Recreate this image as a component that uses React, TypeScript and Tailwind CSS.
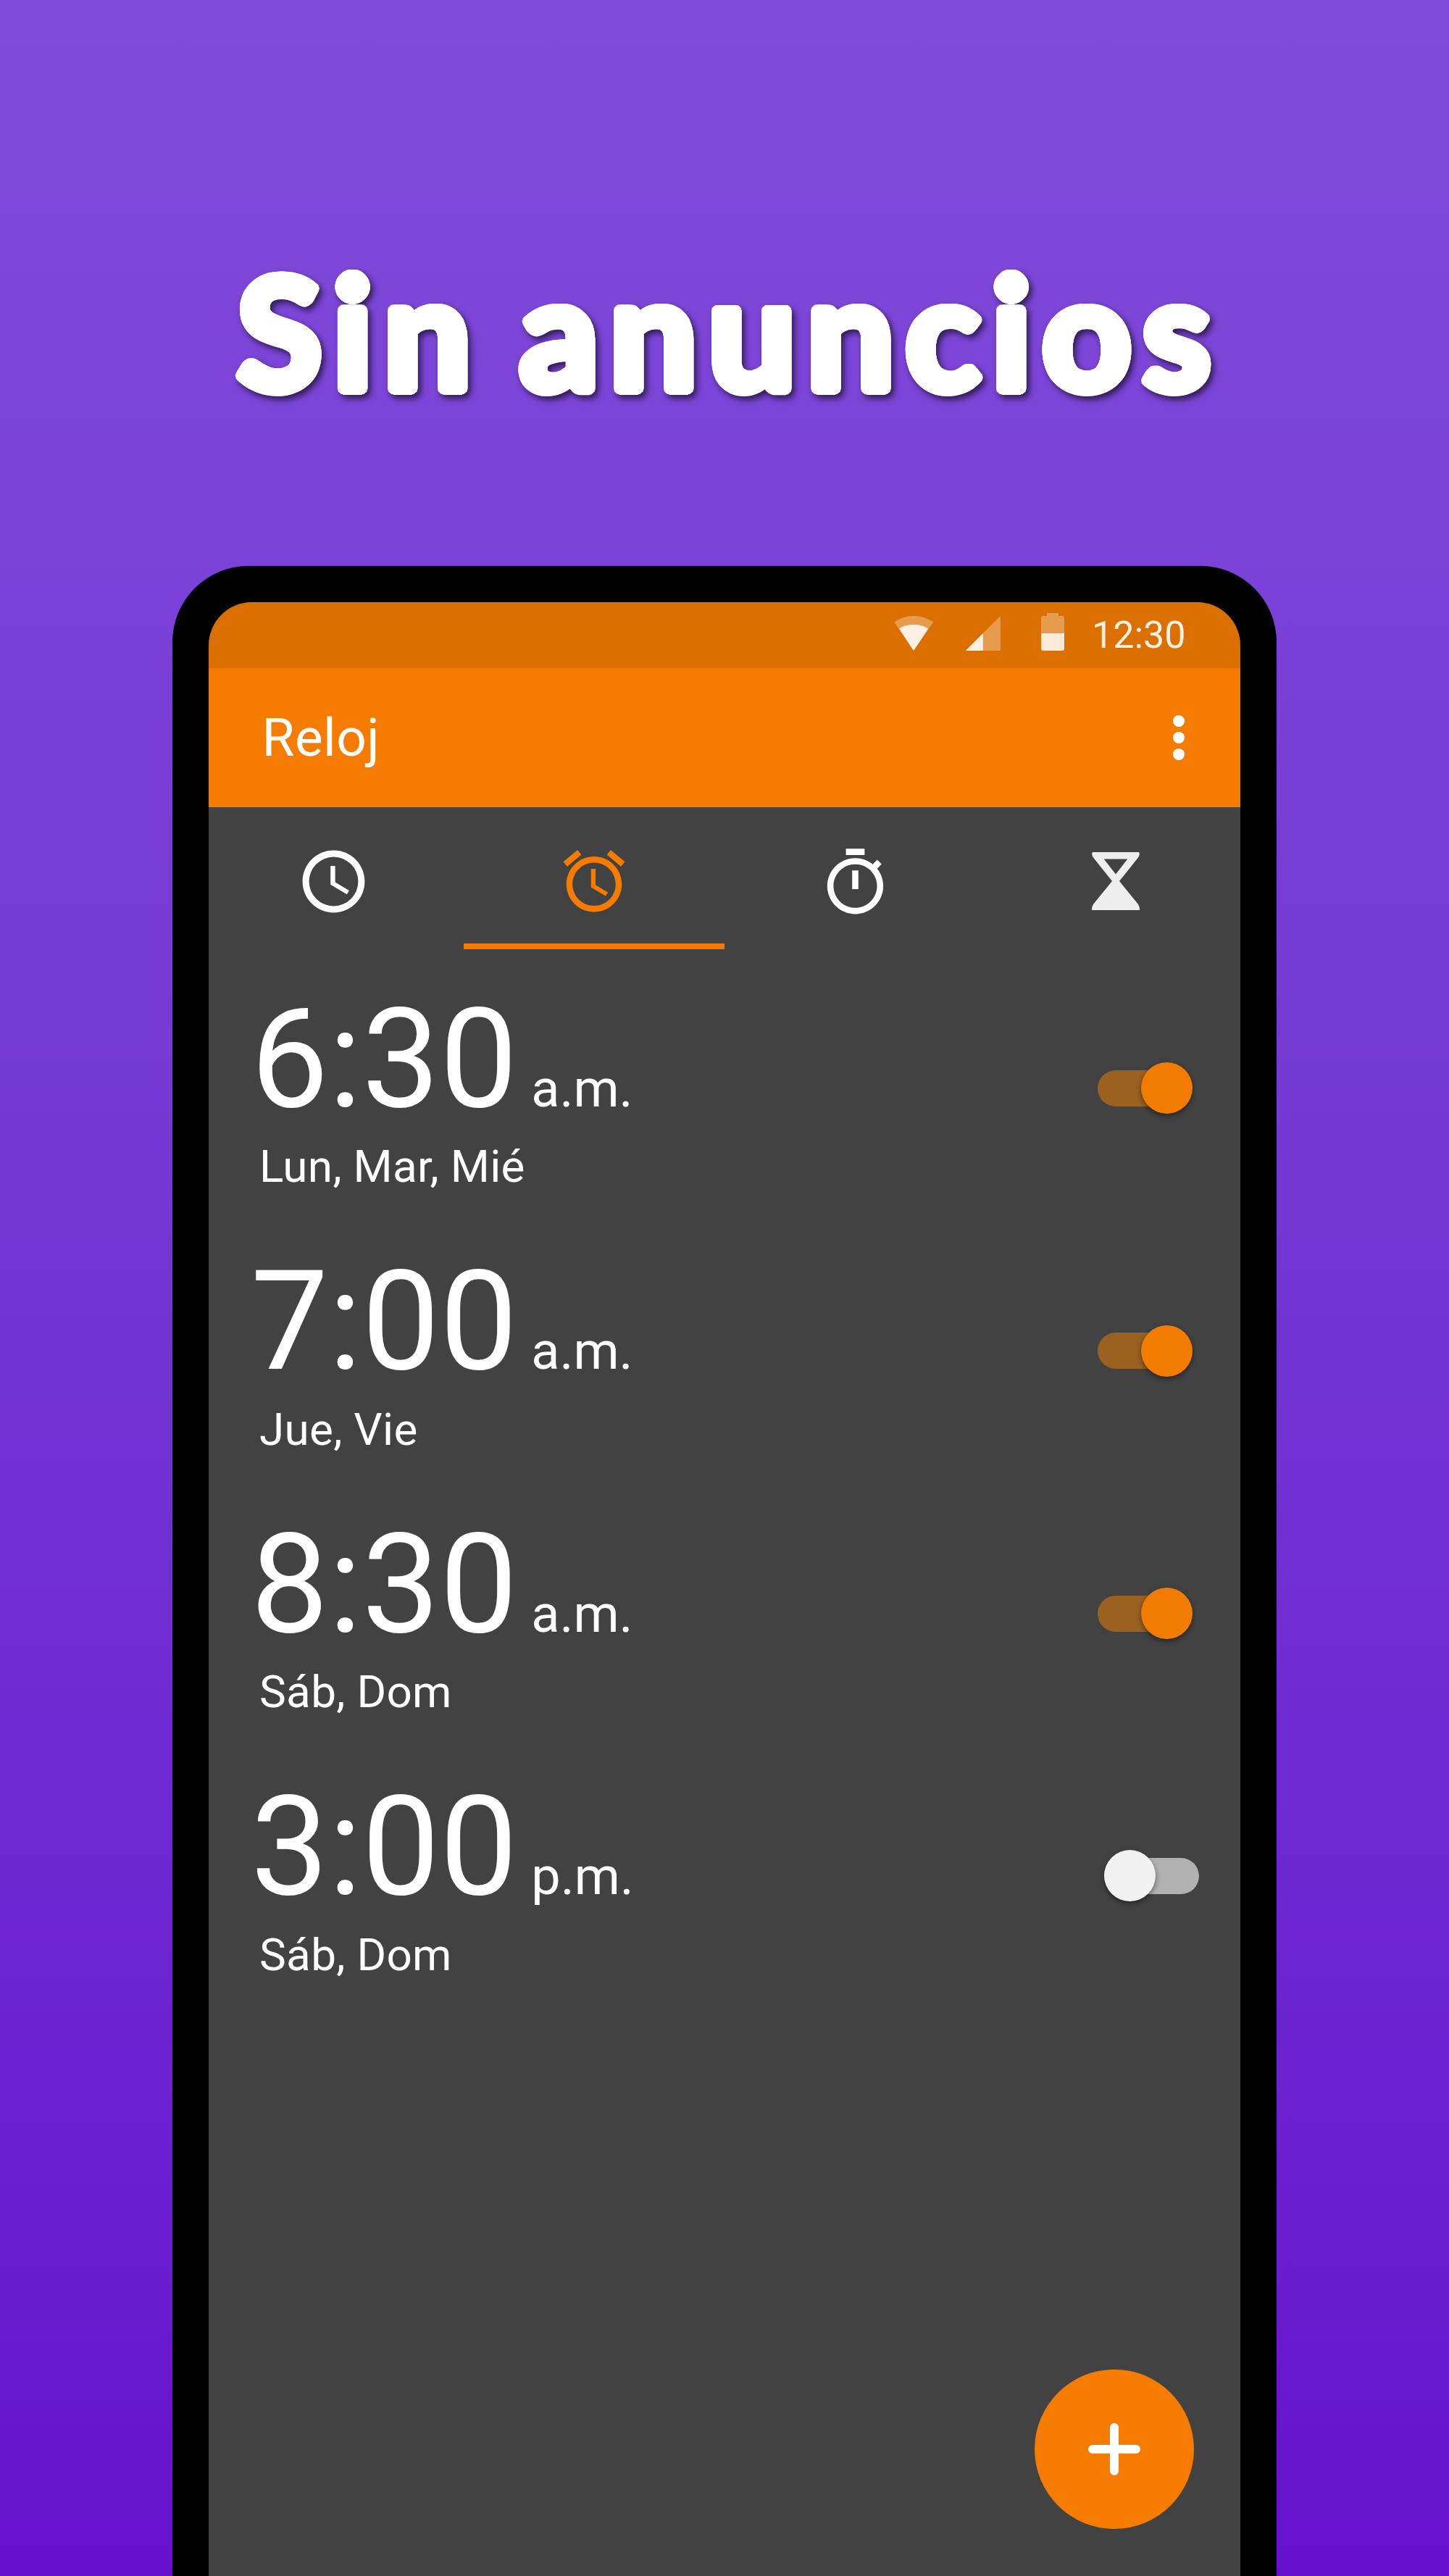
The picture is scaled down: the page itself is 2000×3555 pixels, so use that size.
import React from "react";

const ALARMS = [
  { time: "6:30", period: "a.m.", days: "Lun, Mar, Mié", on: true },
  { time: "7:00", period: "a.m.", days: "Jue, Vie", on: true },
  { time: "8:30", period: "a.m.", days: "Sáb, Dom", on: true },
  { time: "3:00", period: "p.m.", days: "Sáb, Dom", on: false },
];

// A ring of solid shadows thickens the letters and rounds their corners.
const ROUNDING = Array.from({ length: 32 }, (_, i) => {
  const angle = (i / 32) * Math.PI * 2;
  return `${(Math.cos(angle) * 7.5).toFixed(2)}px ${(Math.sin(angle) * 7.5).toFixed(2)}px 0 #fff`;
}).join(", ");

function StatusIcons() {
  return (
    <svg className="mt-[15px] h-[52px] w-[236px]" viewBox="1234 846 236 52" fill="#fff">
      <path opacity=".3" d="M1234.4 858.7Q1246 850 1261 850T1288 858.7L1261 898Z" />
      <path opacity=".85" d="M1241 867.5Q1249 862 1261 862T1281.3 867.5L1261 898Z" />
      <path opacity=".3" d="M1332.8 898L1381 850V898Z" />
      <path opacity=".85" d="M1332.8 898L1356.8 874V898Z" />
      <path opacity=".3" d="M1437 874V853q0-3 3-3h5v-4h16v4h5q3 0 3 3v21Z" />
      <path opacity=".85" d="M1437 874h32v21q0 3-3 3h-26q-3 0-3-3Z" />
    </svg>
  );
}

function ClockIcon() {
  return (
    <svg className="size-[103px]" viewBox="0 0 24 24" fill="currentColor">
      <path d="M12 2C6.48 2 2 6.48 2 12s4.48 10 10 10 10-4.48 10-10S17.52 2 12 2zm0 17.9a7.9 7.9 0 1 1 0-15.8 7.9 7.9 0 0 1 0 15.8zM12.5 7H11v6l5.25 3.15.75-1.23-4.5-2.67z" />
    </svg>
  );
}

function AlarmIcon() {
  return (
    <svg className="size-[102px]" viewBox="0 0 24 24" fill="currentColor">
      <path d="M22 5.72l-4.6-3.86-1.29 1.53 4.6 3.86L22 5.72zM7.88 3.39L6.6 1.86 2 5.71l1.29 1.53 4.59-3.85zM12.5 8H11v6l4.75 2.85.75-1.23-4-2.37V8zM12 4c-4.97 0-9 4.03-9 9s4.02 9 9 9c4.97 0 9-4.03 9-9s-4.03-9-9-9zm0 16c-3.87 0-7-3.13-7-7s3.13-7 7-7 7 3.13 7 7-3.13 7-7 7z" />
    </svg>
  );
}

function TimerIcon() {
  return (
    <svg className="mt-[4px] size-[103px]" viewBox="0 0 24 24" fill="currentColor">
      <path d="M15 1H9v2h6V1zm-4 13h2V8h-2v6zm8.03-6.61l1.42-1.42c-.43-.51-.9-.99-1.41-1.41l-1.42 1.42C16.07 4.74 14.12 4 12 4c-4.97 0-9 4.03-9 9s4.02 9 9 9 9-4.03 9-9c0-2.12-.74-4.07-1.97-5.61zM12 20c-3.87 0-7-3.13-7-7s3.13-7 7-7 7 3.13 7 7-3.13 7-7 7z" />
    </svg>
  );
}

function HourglassIcon() {
  return (
    <svg className="h-[80px] w-[66px] text-[#eeeeee]" viewBox="0 0 66 80" fill="currentColor">
      <path
        fillRule="evenodd"
        d="M1 0H65Q67 3 64 7.500L38 40L64 72Q66 75 66 80H0Q0 75 2 72L28 40L2 7.500Q-1 3 1 0ZM16.700 9.500H49.300L33 30.500Z"
      />
    </svg>
  );
}

function Toggle({ on }: { on: boolean }) {
  return (
    <div
      className={
        on
          ? "mt-[99.5px] mr-[66px] flex h-[71px] w-[131px] items-center rounded-full"
          : "mt-[99px] mr-[57px] flex h-[71px] w-[131px] flex-row-reverse items-center rounded-full"
      }
    >
      <div
        className={
          on
            ? "-mr-[71px] h-[50px] w-[131px] shrink-0 rounded-full bg-[#9a6121]"
            : "-ml-[71px] h-[50px] w-[131px] shrink-0 rounded-full bg-[#b1b1b1]"
        }
      />
      <div
        className={
          on
            ? "relative size-[71px] shrink-0 rounded-full bg-[#f27c00] shadow-[0_3px_7px_rgba(0,0,0,0.45)]"
            : "relative size-[71px] shrink-0 rounded-full bg-[#f1f1f1] shadow-[0_3px_7px_rgba(0,0,0,0.45)]"
        }
      />
    </div>
  );
}

export default function App() {
  return (
    <div className="h-[3555px] w-[2000px] overflow-hidden bg-linear-to-b from-[#804bda] to-[#6610ce] font-['Roboto',sans-serif] text-white">
      <header className="flex h-[781px] justify-center pt-[323px] pl-[14px]">
        <h1
          className="font-['Lato',sans-serif] text-[213px] leading-[264px] font-bold whitespace-nowrap tracking-[16px] [word-spacing:-16px] drop-shadow-[4px_5px_4px_rgba(0,0,0,0.6)]"
          style={{ textShadow: ROUNDING }}
        >
          Sin anuncios
        </h1>
      </header>

      <main className="mx-auto h-[2774px] w-[1524px] rounded-t-[105px] bg-black px-[50px] pt-[50px]">
        <div className="relative flex h-[2724px] flex-col overflow-hidden rounded-t-[60px] bg-[#424242]">
          <div className="flex h-[91px] shrink-0 justify-end bg-[#db7000] pr-[74px]">
            <StatusIcons />
            <span className="ml-[37px] w-[131px] pt-[19.5px] text-[52px] leading-[52px] whitespace-nowrap text-white/90">12:30</span>
          </div>

          <div className="flex h-[192px] shrink-0 items-center justify-between bg-[#f57c00] pr-[77px] pl-[73.5px]">
            <span className="text-[73px] leading-[190px] tracking-[0.4px]">Reloj</span>
            <div className="flex flex-col gap-[7px]">
              <i className="size-[16px] rounded-full bg-white" />
              <i className="size-[16px] rounded-full bg-white" />
              <i className="size-[16px] rounded-full bg-white" />
            </div>
          </div>

          <nav className="-mx-2 grid h-[196px] shrink-0 grid-cols-4">
            <div className="flex items-center justify-center pt-[8px]"><ClockIcon /></div>
            <div className="flex items-center justify-center border-b-8 border-[#f57c00] pt-[16px] text-[#f57c00]"><AlarmIcon /></div>
            <div className="flex items-center justify-center pt-[8px]"><TimerIcon /></div>
            <div className="flex items-center justify-center pt-[8px]"><HourglassIcon /></div>
          </nav>

          <ul className="mt-[56.5px]">
            {ALARMS.map((alarm, i) => (
              <li key={i} className="flex h-[362.5px] justify-between pl-[58px]">
                <div>
                  <div className="flex items-baseline text-[191px] leading-[191px]">
                    <span>{alarm.time}</span>
                    <span className="ml-[19px] text-[72px] leading-none">{alarm.period}</span>
                  </div>
                  <p className="mt-[21.5px] ml-[12px] text-[62px] leading-[62px] tracking-[0.3px]">{alarm.days}</p>
                </div>
                <Toggle on={alarm.on} />
              </li>
            ))}
          </ul>

          <button className="absolute right-[64px] bottom-[65px] flex size-[220px] items-center justify-center rounded-full bg-[#f57c00]">
            <svg className="size-[72px]" viewBox="0 0 72 72" stroke="#fff" strokeWidth="12" strokeLinecap="round">
              <path d="M36 6V66M6 36H66" />
            </svg>
          </button>
        </div>
      </main>
    </div>
  );
}
